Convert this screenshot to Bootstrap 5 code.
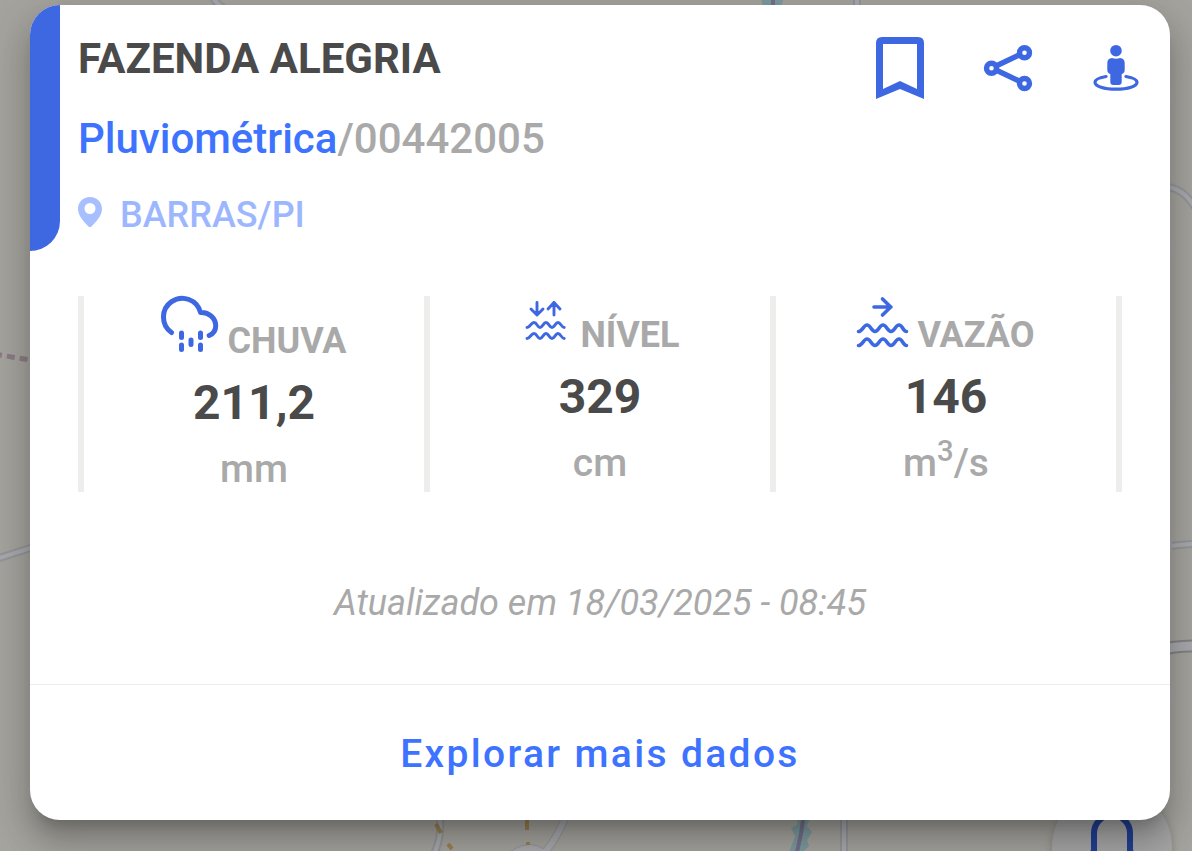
<!DOCTYPE html>
<html lang="pt-BR">
<head>
<meta charset="utf-8">
<meta name="viewport" content="width=device-width, initial-scale=1">
<title>Fazenda Alegria</title>
<link href="https://cdn.jsdelivr.net/npm/bootstrap@5.3.0/dist/css/bootstrap.min.css" rel="stylesheet">
<style>
  :root { --blue: #3e68e2; --link-blue: #3d73ff; --ink: #4a4a4a; --muted: #a9a9a9; --rule: #ededec; }
  body { font-family: Roboto, "Liberation Sans", sans-serif; background: #a4a39d; }
  .page { isolation: isolate; padding: 5px 22px 31px 30px; }
  .map { z-index: -1; }
  .alert-btn { right: 20px; bottom: -56px; width: 120px; height: 120px; background: #a5a5a6; color: #213f91; box-shadow: 0 3px 8px rgba(0,0,0,.2); z-index: -1; }
  .station { border: 0; border-radius: 30px; overflow: hidden;
    box-shadow: 0 15px 15px -9px rgba(0,0,0,.2), 0 24px 30px 3px rgba(0,0,0,.14), 0 9px 42px 6px rgba(0,0,0,.12); }
  .tab { width: 30px; background: var(--blue); border-bottom-right-radius: 30px; }
  .heading { padding: 24px 0 10px 18px; gap: 20px; }
  .name, .kind { font-size: 42px; line-height: 60px; }
  .name { color: var(--ink); font-weight: 700; }
  .kind { color: var(--muted); font-weight: 500; }
  .kind a, .explore { color: var(--link-blue); }
  .place { color: #9db7ff; font-size: 36px; line-height: 52px; font-weight: 500; gap: 18px; }
  .place svg { margin-bottom: 6px; }
  .actions { padding: 27px 24px 0 0; gap: 48px; color: var(--blue); }
  .actions button, .alert-btn { border: 0; padding: 0; }
  .actions button { background: none; color: inherit; width: 60px; height: 72px; }
  .stats { margin: 45px 48px 0; border-right: 6px solid var(--rule); }
  .stat { border-left: 6px solid var(--rule); color: var(--muted); }
  .stat-label { font-size: 36px; line-height: 34px; font-weight: 700; gap: 8px; }
  .stat-label svg { color: var(--blue); overflow: visible; }
  .stat-value { font-size: 48px; line-height: 66px; font-weight: 700; color: var(--ink); margin-top: 12px; }
  .stat-unit { font-size: 39px; line-height: 44px; font-weight: 500; margin: 11px 0 1px; }
  .updated { font-size: 36px; line-height: 48px; margin: 87px 0 57px; color: var(--muted); }
  .explore { border-top: 1px solid var(--rule); padding: 41px 0 38px; font-size: 39px; line-height: 56px; font-weight: 500; letter-spacing: .06em; }
</style>
</head>
<body>
<main class="page position-relative min-vh-100 overflow-hidden">
  <svg class="map position-absolute top-0 start-0 w-100 h-100" viewBox="0 0 1192 851" preserveAspectRatio="none" fill="none" aria-hidden="true">
    <g stroke="#94959a" stroke-width="8">
      <path d="M212 -4q4 8 12 12M857 -2v8M-4 559L40 545M1160 187q24-2 38 26M1160 548q20-4 36-4M430 860q12-16 10-42M565 818q-8 20-20 34M505 860q28-24 44 0M844 818v40"/>
      <path d="M1160 650q14-4 36-4" stroke="#828284" stroke-width="13"/>
    </g>
    <g stroke="#a8a9ac" stroke-width="4">
      <path d="M212 -4q4 8 12 12M857 -2v8M-4 559L40 545M1160 187q24-2 38 26M1160 548q20-4 36-4M430 860q12-16 10-42M844 818v40"/>
      <path d="M565 818q-8 20-20 34M505 860q28-24 44 0" stroke-width="6"/>
      <path d="M1160 650q14-4 36-4" stroke-width="9"/>
    </g>
    <path d="M-6 354L30 360" stroke="#8b7a86" stroke-width="5" stroke-dasharray="8 5"/>
    <path d="M436 824l5 9M448 844l4 5M527 820v10M528 842v3" stroke="#9a8050" stroke-width="4"/>
    <path d="M760 -4h25l-4 10h-18zM796 818l14 0-3 8 5 6-5 8 2 6-6 6-14 0 4-10 2-6-4-8 7-4z" fill="#7d9a9f"/>
    <path d="M773 -2v7M803 820l-2 14-4 18" stroke="#73708a" stroke-width="4"/>
    <g fill="#a5a5a9"><circle cx="1112" cy="97" r="60"/><circle cx="1112" cy="246" r="60"/><circle cx="1112" cy="395" r="60"/><circle cx="1112" cy="545" r="60"/><circle cx="1112" cy="694" r="60"/></g>
  </svg>
  <button class="alert-btn position-absolute rounded-circle" type="button" aria-label="Alertas">
    <svg class="d-block" width="120" height="120" viewBox="0 0 120 120" fill="none" stroke="currentColor" stroke-width="6"><path d="M42 64V46a18 18 0 0 1 36 0v18l8 10H34z" stroke-linejoin="round"/></svg>
  </button>

  <article class="station card">
    <header class="d-flex">
      <div class="tab flex-shrink-0"></div>
      <div class="heading d-flex flex-column flex-grow-1">
        <h1 class="name m-0">FAZENDA ALEGRIA</h1>
        <div class="kind"><a href="#" class="text-decoration-none">Pluviométrica</a>/00442005</div>
        <div class="place d-flex align-items-center">
          <svg width="24" height="30" viewBox="0 0 24 30"><path fill="#a7bfff" fill-rule="evenodd" d="M12 0C5 0 0 5 0 12c0 7 7 14 10.500 17.500q1.500 1 3 0C17 26 24 19 24 12 24 5 19 0 12 0zm0 6a5.500 5.500 0 1 1 0 11 5.500 5.500 0 0 1 0-11z"/></svg>
          <span>BARRAS/PI</span>
        </div>
      </div>
      <div class="actions d-flex align-items-start">
        <button type="button" aria-label="Salvar"><svg class="d-block" width="60" height="72" viewBox="0 0 60 72"><path fill="currentColor" fill-rule="evenodd" d="M12 5h36q6 0 6 6v56L30 57 6 67V11q0-6 6-6zM13 12v45l17-8 17 8V12z"/></svg></button>
        <button type="button" aria-label="Compartilhar"><svg class="d-block" width="60" height="72" viewBox="0 0 60 72" fill="none" stroke="currentColor" stroke-width="5.400"><circle cx="13.500" cy="36.200" r="5"/><circle cx="46.500" cy="20.700" r="5"/><circle cx="46.500" cy="51.500" r="5"/><path d="M18 34l24-11.500M18 38l24 11.500"/></svg></button>
        <button type="button" aria-label="Ver no local"><svg class="d-block" width="60" height="72" viewBox="0 0 60 72" fill="currentColor"><circle cx="30" cy="18.700" r="5.800"/><path d="M26 26q4 1.500 8 0 4.700.5 4.700 5v7q0 3-3 4v8q0 3-3 3h-5.400q-3 0-3-3v-8q-3-1-3-4v-7q0-4.500 4.700-5z"/><path d="M20 44.500c-7 1.200-11 3.300-11 5.700 0 4 9 7 21 7s21-3 21-7c0-2.400-4-4.500-11-5.700" fill="none" stroke="currentColor" stroke-width="3.200" stroke-linecap="round"/></svg></button>
      </div>
    </header>

    <section class="stats d-flex text-center">
      <div class="stat col">
        <div class="stat-label d-flex justify-content-center align-items-end">
          <svg class="mb-1" width="58" height="58" viewBox="0 0 58 58" fill="none" stroke="currentColor" stroke-width="5" stroke-linecap="round" stroke-linejoin="round"><path d="M10.500 36.500A18.800 18.800 0 1 1 39.500 16.500C48 16 54.700 22 54.700 30c0 5-3 8-6.500 9.500M20.500 37v4.500M39.500 37v4.500M20.500 49v4.500M39.500 49v4.500M30 44v4.500"/></svg>
          <span>CHUVA</span>
        </div>
        <div class="stat-value">211,2</div>
        <div class="stat-unit">mm</div>
      </div>
      <div class="stat col">
        <div class="stat-label d-flex justify-content-center align-items-end">
          <svg class="mb-1" width="52" height="52" viewBox="0 0 52 52" fill="none" stroke="currentColor" stroke-width="2.900" stroke-linecap="round" stroke-linejoin="round"><path d="M17 6.500V19M11 13l6 6 6-6M34 19V6.500M28 13l6-6.500 6 6.500"/><path id="wave" d="M7 31.500c3 0 4-5 7-5s3.500 5 6 5 3.300-5 6-5 3.500 5 6 5 3.300-5 6-5 3.500 5 6.200 5"/><use href="#wave" y="11"/></svg>
          <span>NÍVEL</span>
        </div>
        <div class="stat-value">329</div>
        <div class="stat-unit">cm</div>
      </div>
      <div class="stat col">
        <div class="stat-label d-flex justify-content-center align-items-end">
          <svg class="mb-1" width="52" height="52" viewBox="0 0 52 52" fill="none" stroke="currentColor" stroke-width="3.600" stroke-linecap="round" stroke-linejoin="round"><path d="M17 11h17M25.500 3l8.200 8-8.200 8"/><path id="flow" d="M1.500 35.500c4 0 5-6.500 8.500-6.500s4.500 6.500 8 6.500 4.500-6.500 8-6.500 4.500 6.500 8 6.500 4.500-6.500 8-6.500 4 6.500 7.500 6.500"/><use href="#flow" y="14"/></svg>
          <span>VAZÃO</span>
        </div>
        <div class="stat-value">146</div>
        <div class="stat-unit">m<sup>3</sup>/s</div>
      </div>
    </section>

    <p class="updated text-center fst-italic">Atualizado em 18/03/2025 - 08:45</p>
    <a href="#" class="explore d-block text-center text-decoration-none">Explorar mais dados</a>
  </article>
</main>
<script src="https://cdn.jsdelivr.net/npm/bootstrap@5.3.0/dist/js/bootstrap.bundle.min.js"></script>
</body>
</html>
